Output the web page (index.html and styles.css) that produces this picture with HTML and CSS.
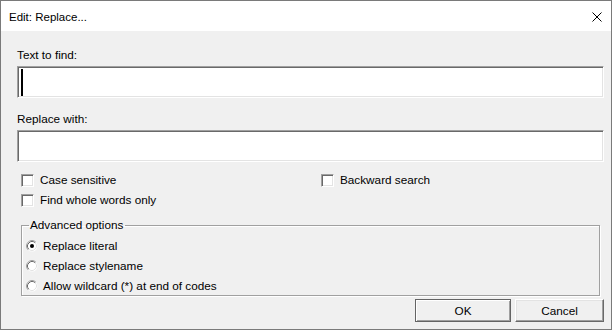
FILE: index.html
```html
<!DOCTYPE html>
<html>
<head>
<meta charset="utf-8">
<title>Edit: Replace...</title>
<link rel="stylesheet" href="styles.css">
</head>
<body>
<div class="window">
  <div class="titlebar">
    <span class="title">Edit: Replace...</span>
    <svg class="close" width="10" height="10" viewBox="0 0 10 10"><path d="M0.5 0.5 L9.5 9.5 M9.5 0.5 L0.5 9.5" stroke="#000" stroke-width="1" fill="none"/></svg>
  </div>
  <div class="client">
    <div class="field-label">Text to find:</div>
    <div class="textbox"><span class="caret"></span></div>
    <div class="field-label second">Replace with:</div>
    <div class="textbox"></div>
    <div class="checks">
      <div class="check"><span class="box"></span><span>Case sensitive</span></div>
      <div class="check"><span class="box"></span><span>Backward search</span></div>
      <div class="check"><span class="box"></span><span>Find whole words only</span></div>
    </div>
    <fieldset class="group">
      <legend>Advanced options</legend>
      <div class="radio">
        <svg class="rb" width="12" height="12" viewBox="0 0 12 12"><circle cx="6" cy="6" r="5.5" fill="#fff"/><path d="M2.11 9.89 A5.5 5.5 0 0 1 9.89 2.11" stroke="#a0a0a0" fill="none"/><path d="M2.82 9.18 A4.5 4.5 0 0 1 9.18 2.82" stroke="#696969" fill="none"/><path d="M9.18 2.82 A4.5 4.5 0 0 1 2.82 9.18" stroke="#e3e3e3" fill="none"/><circle cx="6" cy="6" r="2" fill="#000"/></svg>
        <span>Replace literal</span>
      </div>
      <div class="radio">
        <svg class="rb" width="12" height="12" viewBox="0 0 12 12"><circle cx="6" cy="6" r="5.5" fill="#fff"/><path d="M2.11 9.89 A5.5 5.5 0 0 1 9.89 2.11" stroke="#a0a0a0" fill="none"/><path d="M2.82 9.18 A4.5 4.5 0 0 1 9.18 2.82" stroke="#696969" fill="none"/><path d="M9.18 2.82 A4.5 4.5 0 0 1 2.82 9.18" stroke="#e3e3e3" fill="none"/></svg>
        <span>Replace stylename</span>
      </div>
      <div class="radio">
        <svg class="rb" width="12" height="12" viewBox="0 0 12 12"><circle cx="6" cy="6" r="5.5" fill="#fff"/><path d="M2.11 9.89 A5.5 5.5 0 0 1 9.89 2.11" stroke="#a0a0a0" fill="none"/><path d="M2.82 9.18 A4.5 4.5 0 0 1 9.18 2.82" stroke="#696969" fill="none"/><path d="M9.18 2.82 A4.5 4.5 0 0 1 2.82 9.18" stroke="#e3e3e3" fill="none"/></svg>
        <span>Allow wildcard (*) at end of codes</span>
      </div>
    </fieldset>
    <div class="buttons">
      <div class="btn default ok">OK</div>
      <div class="btn cancel">Cancel</div>
    </div>
  </div>
</div>
</body>
</html>
```
FILE: styles.css
```css
html, body {
  margin: 0;
  padding: 0;
  background: #f0f0f0;
}
body {
  font-family: "Liberation Sans", Arial, sans-serif;
  font-size: 11.75px;
  color: #000;
}
.window {
  width: 612px;
  height: 330px;
  box-sizing: border-box;
  border: 1px solid #7a7a7a;
  display: flex;
  flex-direction: column;
  overflow: hidden;
}
.titlebar {
  height: 30px;
  flex: none;
  background: #fff;
  display: flex;
  align-items: center;
  justify-content: space-between;
  padding: 0 9px 0 8px;
  font-size: 11.5px;
}
.title {
  line-height: 16px;
  padding-top: 1px;
}
.close {
  display: block;
  margin-top: 1px;
}
.client {
  flex: 1;
  background: #f0f0f0;
  padding: 16px 7px 0 16px;
  display: flex;
  flex-direction: column;
}
.field-label {
  line-height: 16px;
  height: 16px;
}
.field-label.second {
  margin-top: 13px;
}
.textbox {
  margin-top: 3px;
  height: 32px;
  box-sizing: border-box;
  background: #fff;
  border: 1px solid;
  border-color: #a0a0a0 #fff #fff #a0a0a0;
  box-shadow: inset 1px 1px #696969, inset -1px -1px #e3e3e3;
  display: flex;
  align-items: center;
}
.caret {
  display: block;
  width: 2px;
  height: 27px;
  background: #000;
  margin-left: 3px;
}
.checks {
  margin: 8px 0 0 4px;
  display: grid;
  grid-template-columns: 300px auto;
  grid-auto-rows: 20px;
}
.check {
  display: flex;
  align-items: center;
  gap: 6px;
  line-height: 16px;
}
.box {
  display: block;
  width: 13px;
  height: 13px;
  box-sizing: border-box;
  background: #fff;
  border: 1px solid;
  border-color: #a0a0a0 #fff #fff #a0a0a0;
  box-shadow: inset 1px 1px #696969, inset -1px -1px #e3e3e3;
  flex: none;
}
.group {
  margin: 7px 4px 0 4px;
  padding: 3px 0 0 0;
  height: 79px;
  box-sizing: border-box;
  border: 1px solid #a0a0a0;
  box-shadow: inset 1px 1px #fff, 1px 1px #fff;
  min-width: 0;
}
.group legend {
  margin-left: 7px;
  padding: 0 2px 0 1px;
  line-height: 16px;
}
.radio {
  height: 20px;
  display: flex;
  align-items: center;
  gap: 5px;
  padding-left: 4px;
  line-height: 16px;
}
.rb {
  display: block;
  flex: none;
}
.buttons {
  margin-top: 3px;
  display: flex;
  justify-content: flex-end;
  gap: 4px;
}
.btn {
  height: 23px;
  box-sizing: border-box;
  display: flex;
  align-items: center;
  justify-content: center;
  background: #f0f0f0;
  border: 1px solid;
  border-color: #fff #696969 #696969 #fff;
  box-shadow: inset -1px -1px #a0a0a0, inset 1px 1px #e3e3e3;
}
.btn.default {
  border-color: #646464;
  box-shadow: inset 1px 1px #fff, inset -1px -1px #a0a0a0;
}
.ok {
  width: 96px;
}
.cancel {
  width: 89px;
}
```
